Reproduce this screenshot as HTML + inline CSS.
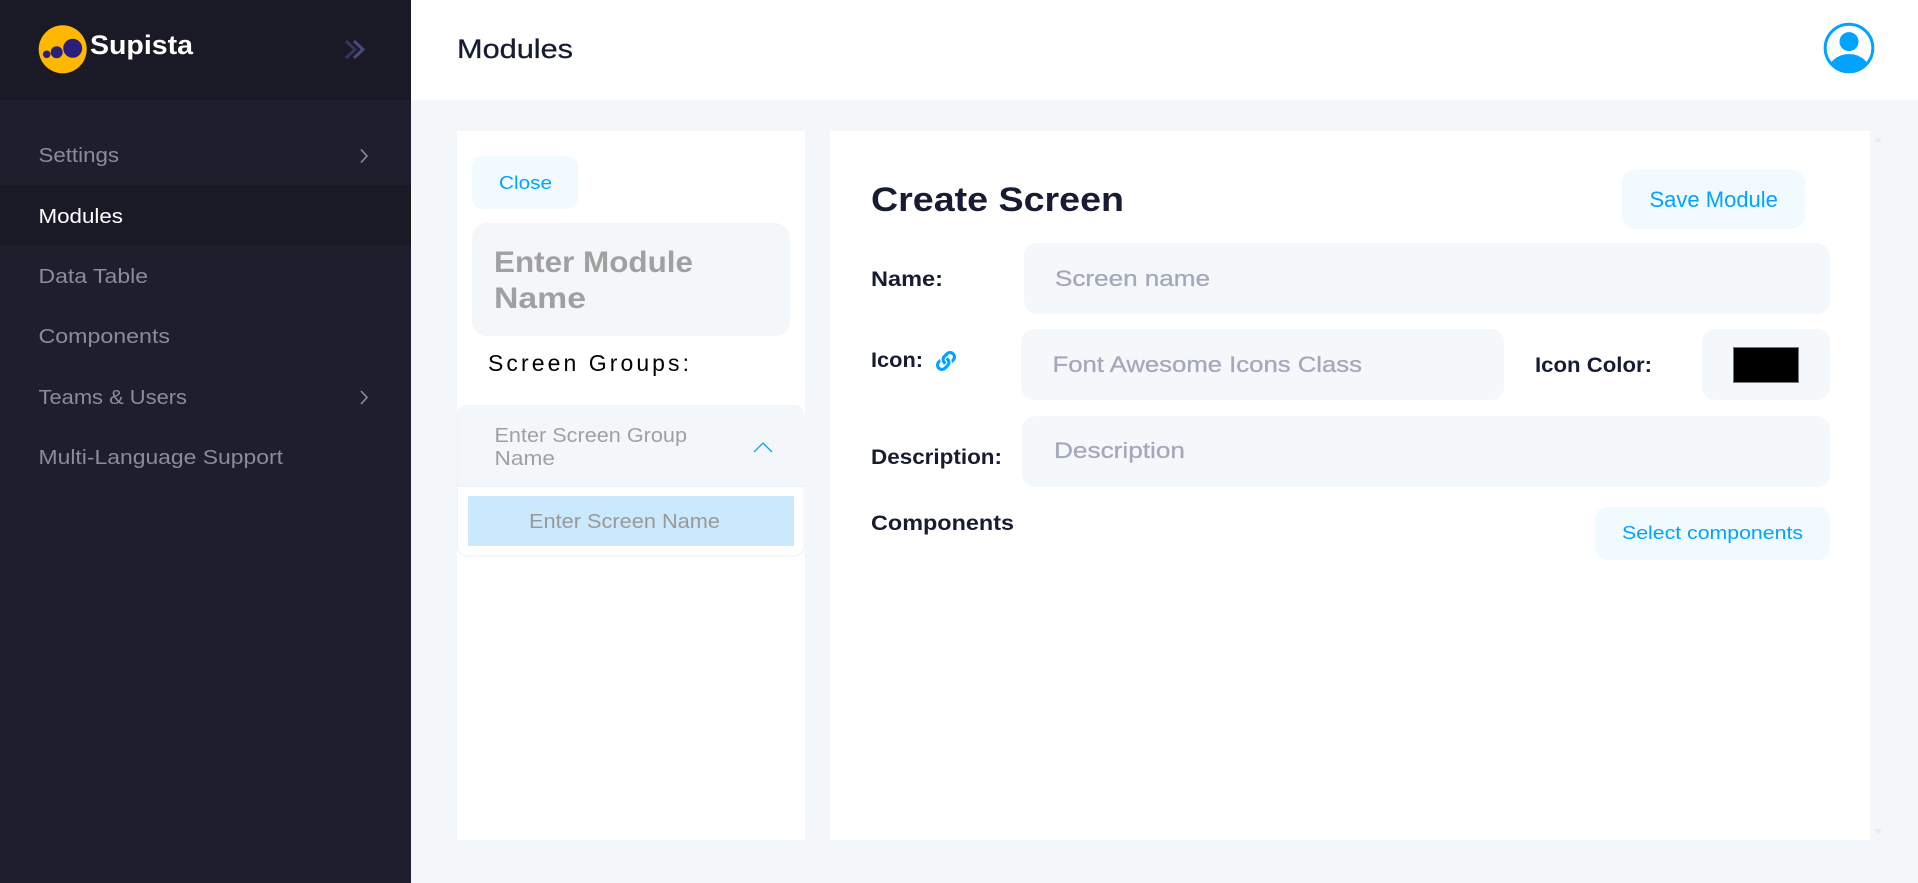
<!DOCTYPE html>
<html lang="en"><head><meta charset="utf-8"><title>Modules</title>
<style>
html,body{margin:0;padding:0;width:1918px;height:883px;overflow:hidden;background:#f3f7fa}
svg{display:block}
text{font-family:"Liberation Sans",sans-serif;white-space:pre}
.nav{font-size:20.5px;fill:#8b8b9e}
.lab{font-size:21px;font-weight:700;fill:#181c32}
.ph{font-size:22.5px;fill:#a5a8ba;stroke:#a5a8ba;stroke-width:.3px}
.blue{fill:#00a3ff}
</style></head><body>
<svg width="1918" height="883" viewBox="0 0 1918 883" xmlns="http://www.w3.org/2000/svg">
<rect width="1918" height="883" fill="#f3f7fa"/>
<!-- sidebar -->
<rect width="411" height="883" fill="#1e1e2d"/>
<rect width="411" height="100" fill="#1a1a27"/>
<rect y="185" width="411" height="61" fill="#1a1a27"/>
<circle cx="62.7" cy="49.3" r="24" fill="#ffb800"/>
<circle cx="72.7" cy="48.3" r="9.5" fill="#2a1f7a"/>
<circle cx="56.7" cy="52.3" r="6" fill="#2a1f7a"/>
<circle cx="46.7" cy="54.3" r="3.8" fill="#2a1f7a"/>
<text x="90" y="54" font-size="27" font-weight="700" fill="#fff" textLength="103" lengthAdjust="spacingAndGlyphs">Supista</text>
<path d="M346 41l9 8.500-9 8.500" fill="none" stroke="#33365a" stroke-width="3"/>
<path d="M354 41l9 8.500-9 8.500" fill="none" stroke="#474a7d" stroke-width="3"/>
<text class="nav" x="38.500" y="162" textLength="80.500" lengthAdjust="spacingAndGlyphs">Settings</text>
<text class="nav" x="38.500" y="223" style="fill:#fff" textLength="84.500" lengthAdjust="spacingAndGlyphs">Modules</text>
<text class="nav" x="38.500" y="283" textLength="109.500" lengthAdjust="spacingAndGlyphs">Data Table</text>
<text class="nav" x="38.500" y="343" textLength="131.500" lengthAdjust="spacingAndGlyphs">Components</text>
<text class="nav" x="38.500" y="404" textLength="148.500" lengthAdjust="spacingAndGlyphs">Teams &amp; Users</text>
<text class="nav" x="38.500" y="464" textLength="244.500" lengthAdjust="spacingAndGlyphs">Multi-Language Support</text>
<path d="M361 149.500l6 6.500-6 6.500" fill="none" stroke="#8b8b9e" stroke-width="1.600"/>
<path d="M361 391l6 6.500-6 6.500" fill="none" stroke="#8b8b9e" stroke-width="1.600"/>
<!-- top bar -->
<rect x="411" width="1507" height="100" fill="#fff"/>
<text x="457" y="58" font-size="26.500" fill="#181c32" stroke="#181c32" stroke-width=".3" textLength="116" lengthAdjust="spacingAndGlyphs">Modules</text>
<circle cx="1849" cy="48" r="23.800" fill="#fff" stroke="#00a3ff" stroke-width="3"/>
<circle cx="1849" cy="41.600" r="9.500" fill="#00a3ff"/>
<clipPath id="av"><circle cx="1849" cy="48" r="25"/></clipPath>
<ellipse cx="1849" cy="74" rx="22" ry="20" fill="#00a3ff" clip-path="url(#av)"/>
<!-- left panel -->
<rect x="457" y="131" width="348" height="709" fill="#fff"/>
<rect x="472" y="156" width="106" height="53" rx="11" fill="#f1faff"/>
<text class="blue" x="499" y="189" font-size="18.500" textLength="53" lengthAdjust="spacingAndGlyphs">Close</text>
<rect x="472" y="223" width="318" height="113" rx="15" fill="#f4f7fa"/>
<text x="494" y="272" font-size="30" font-weight="700" fill="#a0a0a0" textLength="199" lengthAdjust="spacingAndGlyphs">Enter Module</text>
<text x="494" y="308" font-size="30" font-weight="700" fill="#a0a0a0" textLength="92" lengthAdjust="spacingAndGlyphs">Name</text>
<text x="488" y="371" font-size="23" fill="#000" textLength="201" lengthAdjust="spacing">Screen Groups:</text>
<rect x="457.500" y="405.500" width="346.500" height="150.500" rx="10" fill="#fff" stroke="#f0f0f3"/>
<path d="M458 486V415.500a10 10 0 0 1 10-10H794a10 10 0 0 1 10 10V486z" fill="#f4f7fa"/>
<rect x="458" y="486" width="346" height="1" fill="#eff1f4"/>
<text x="494.500" y="442" font-size="20.500" fill="#a0a0a0" textLength="192.500" lengthAdjust="spacingAndGlyphs">Enter Screen Group</text>
<text x="494.500" y="465" font-size="20.500" fill="#a0a0a0" textLength="60.500" lengthAdjust="spacingAndGlyphs">Name</text>
<path d="M754 452l9-9 9 9" fill="none" stroke="#00a3ff" stroke-width="1.300"/>
<rect x="468" y="496" width="326" height="50" fill="#cbe9fc"/>
<text x="529" y="528" font-size="20.500" fill="#999" textLength="191" lengthAdjust="spacingAndGlyphs">Enter Screen Name</text>
<!-- right panel -->
<rect x="830" y="131" width="1040" height="709" fill="#fff"/>
<text x="871" y="211" font-size="34" font-weight="700" fill="#181c32" textLength="253" lengthAdjust="spacingAndGlyphs">Create Screen</text>
<rect x="1622" y="170" width="183" height="59" rx="13" fill="#f1faff"/>
<text class="blue" x="1649.500" y="207" font-size="22">Save Module</text>
<text class="lab" x="871" y="286" textLength="72" lengthAdjust="spacingAndGlyphs">Name:</text>
<rect x="1024" y="243" width="806" height="71" rx="13" fill="#f5f8fa"/>
<text class="ph" x="1055" y="286" textLength="155" lengthAdjust="spacingAndGlyphs">Screen name</text>
<text class="lab" x="871" y="367" textLength="52" lengthAdjust="spacingAndGlyphs">Icon:</text>
<svg x="936" y="351" width="20" height="20" viewBox="0 0 512 512"><path fill="#00a3ff" d="M326.612 185.391c59.747 59.809 58.927 155.698.36 214.59-.11.12-.24.25-.36.37l-67.2 67.2c-59.27 59.27-155.699 59.262-214.96 0-59.27-59.26-59.27-155.7 0-214.96l37.106-37.106c9.84-9.84 26.786-3.3 27.294 10.606.648 17.722 3.826 35.527 9.69 52.721 1.986 5.822.567 12.262-3.783 16.612l-13.087 13.087c-28.026 28.026-28.905 73.66-1.155 101.96 28.024 28.579 74.086 28.749 102.325.51l67.2-67.19c28.191-28.191 28.073-73.757 0-101.83-3.701-3.694-7.429-6.564-10.341-8.569a16.037 16.037 0 0 1-6.947-12.606c-.396-10.567 3.348-21.456 11.698-29.806l21.054-21.055c5.521-5.521 14.182-6.199 20.584-1.731a152.482 152.482 0 0 1 20.522 17.197zM467.547 44.449c-59.261-59.262-155.69-59.27-214.96 0l-67.2 67.2c-.12.12-.25.25-.36.37-58.566 58.892-59.387 154.781.36 214.59a152.454 152.454 0 0 0 20.521 17.196c6.402 4.468 15.064 3.789 20.584-1.731l21.054-21.055c8.35-8.35 12.094-19.239 11.698-29.806a16.037 16.037 0 0 0-6.947-12.606c-2.912-2.005-6.64-4.875-10.341-8.569-28.073-28.073-28.191-73.639 0-101.83l67.2-67.19c28.239-28.239 74.3-28.069 102.325.51 27.75 28.3 26.872 73.934-1.155 101.96l-13.087 13.087c-4.35 4.35-5.769 10.79-3.783 16.612 5.864 17.194 9.042 34.999 9.69 52.721.509 13.906 17.454 20.446 27.294 10.606l37.106-37.106c59.271-59.259 59.271-155.699.001-214.959z"/></svg>
<rect x="1021" y="329" width="483" height="71" rx="13" fill="#f5f8fa"/>
<text class="ph" x="1052.500" y="372" textLength="309.500" lengthAdjust="spacingAndGlyphs">Font Awesome Icons Class</text>
<text class="lab" x="1535" y="372" textLength="117" lengthAdjust="spacingAndGlyphs">Icon Color:</text>
<rect x="1702" y="329" width="128" height="71" rx="13" fill="#f5f8fa"/>
<rect x="1733.500" y="347.500" width="65" height="35" fill="#000" stroke="#767676"/>
<text class="lab" x="871" y="464" textLength="131" lengthAdjust="spacingAndGlyphs">Description:</text>
<rect x="1022" y="416" width="808" height="71" rx="13" fill="#f5f8fa"/>
<text class="ph" x="1054" y="458" textLength="131" lengthAdjust="spacingAndGlyphs">Description</text>
<text class="lab" x="871" y="530" textLength="143" lengthAdjust="spacingAndGlyphs">Components</text>
<rect x="1595" y="507" width="235" height="53" rx="12" fill="#f1faff"/>
<text class="blue" x="1622" y="539" font-size="18.500" textLength="181" lengthAdjust="spacingAndGlyphs">Select components</text>
<!-- scrollbar arrows -->
<path d="M1874 142h8l-4-5z" fill="#e9ebed"/>
<path d="M1874 829h8l-4 5z" fill="#e9ebed"/>
</svg>
</body></html>
